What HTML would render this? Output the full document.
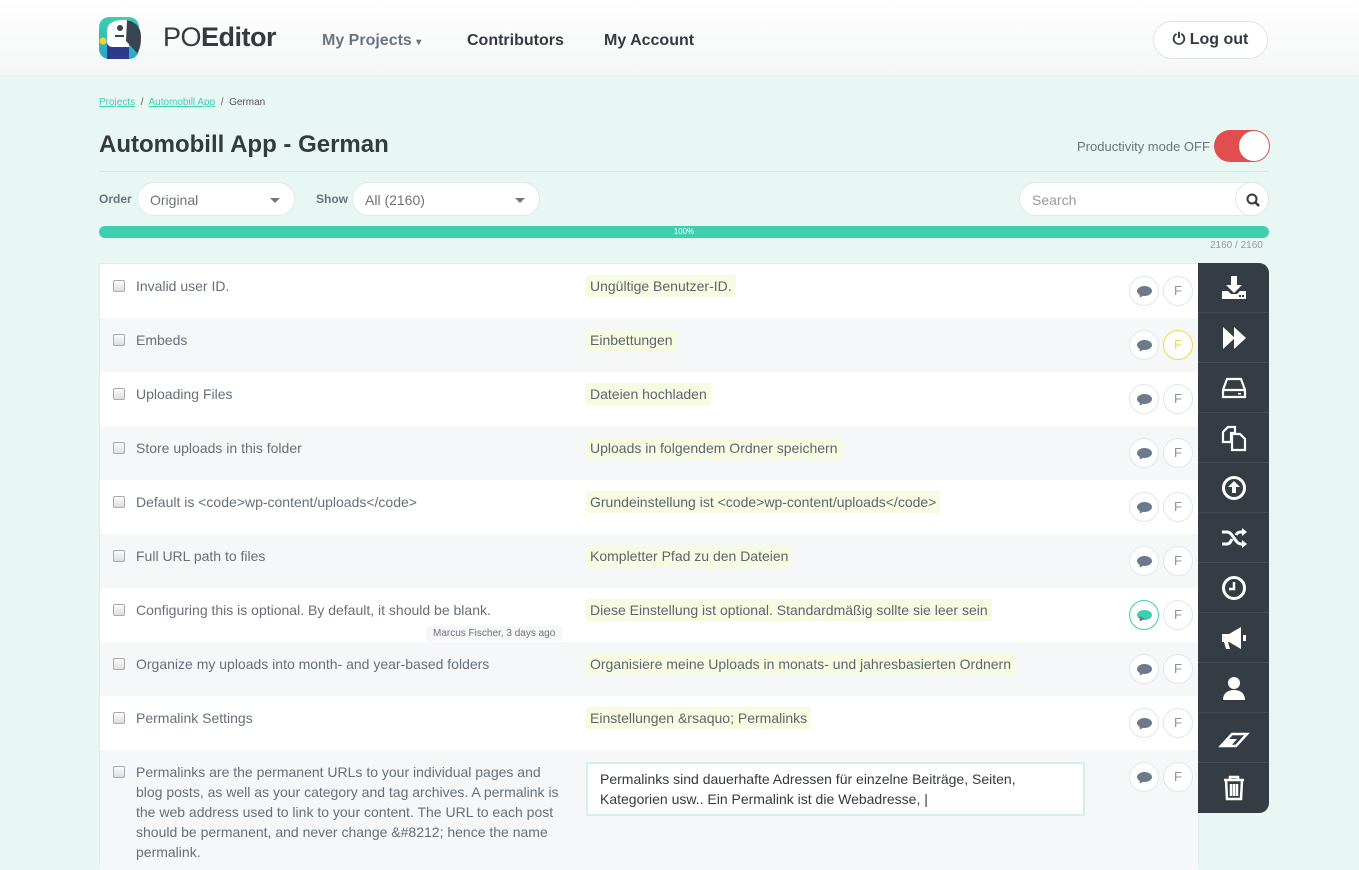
<!DOCTYPE html>
<html><head><meta charset="utf-8"><style>
*{box-sizing:border-box;margin:0;padding:0}
body{width:1359px;height:850px;overflow:hidden;background:#e8f7f4;font-family:"Liberation Sans",Arial,sans-serif;color:#5f6b76;position:relative}
.hdr{position:absolute;left:0;top:0;width:1359px;height:75px;background:linear-gradient(#fff,#f5f6f6)}
.nav{position:absolute;top:32px;font-size:16px;font-weight:bold;color:#343a40}
.abs{position:absolute}
.sel{position:absolute;top:182px;height:34px;background:#fff;border:1px solid #e2e8e8;border-radius:17px;font-size:14px;color:#6b747c;padding:9px 12px}
.caret{position:absolute;right:14px;top:15px;border-left:5px solid transparent;border-right:5px solid transparent;border-top:5px solid #777}
.list{position:absolute;left:99px;top:263px;width:1100px;height:600px;background:#fff;border:1px solid #e4eaea}
.row{position:absolute;left:0;width:1098px;height:54px}
.row.g{background:#f5f7f9}
.cb{position:absolute;left:13px;top:16px;width:12px;height:12px;border:1px solid #aaa;border-radius:2px;background:linear-gradient(#fcfcfc,#ddd)}
.src{position:absolute;left:36px;top:12px;font-size:14px;color:#66707a;line-height:20px}
.tr{position:absolute;left:486px;top:11px;font-size:14px;color:#5b6670;background:#f6fbe2;padding:2px 4px;line-height:18px}
.ic{position:absolute;top:12px;width:30px;height:30px;border:1px solid #e2e6e8;border-radius:50%;background:#fff}
.ic.c{left:1029px}.ic.f{left:1063px;font-size:13px;color:#8a9399;text-align:center;line-height:28px}
.bub{position:absolute;left:7px;top:9px;width:15px;height:10px;border-radius:50%;background:#6d7a8c}
.bub:after{content:"";position:absolute;left:1px;top:7px;border-left:3px solid transparent;border-right:3px solid transparent;border-top:5px solid #6d7a8c;transform:rotate(30deg)}
.side{position:absolute;left:1198px;top:263px;width:71px;height:550px;background:#353c43;border-radius:0 10px 10px 0}
.side div{height:50px;border-bottom:1px solid #454c53;display:flex;align-items:center;justify-content:center}
.side div:last-child{border:none}
</style></head><body>
<div class="hdr"></div>
<svg class="abs" style="left:99px;top:17px" width="42" height="42" viewBox="0 0 42 42">
<defs><linearGradient id="lg" x1="0" y1="0" x2="0" y2="1"><stop offset="0" stop-color="#3ecfae"/><stop offset="1" stop-color="#2aa7c8"/></linearGradient></defs>
<rect x="0" y="0" width="40" height="42" rx="10" fill="url(#lg)"/>
<path d="M8 26 L8 42 L30 42 L30 26Z" fill="#2e3a8c"/>
<path d="M8 14 Q8 4 22 3 L30 3 L30 30 L14 30 Q8 30 8 24Z" fill="#fff"/>
<path d="M28 3 Q42 6 42 20 Q42 32 38 36 L27 24Z" fill="#3a4450"/>
<circle cx="21" cy="11" r="3" fill="#3a4450"/><rect x="16" y="18" width="9" height="2" fill="#3a4450"/>
<circle cx="4" cy="24" r="3.5" fill="#f5d327"/></svg>
<div class="abs" style="left:163px;top:22px;font-size:27px;color:#343a40;letter-spacing:-0.5px"><span style="font-weight:300">PO</span><b>Editor</b></div>
<div class="nav" style="left:322px;color:#6b7580">My Projects <span style="font-size:10px">▾</span></div>
<div class="nav" style="left:467px">Contributors</div>
<div class="nav" style="left:604px">My Account</div>
<div class="abs" style="left:1153px;top:21px;width:115px;height:38px;border:1px solid #e0e3e5;border-radius:19px;background:#fff;font-size:16px;font-weight:bold;color:#343a40;text-align:center;line-height:36px">⏻ Log out</div>
<div class="abs" style="left:99px;top:97px;font-size:10px;color:#555"><span style="color:#3ecfae;text-decoration:underline">Projects</span> &nbsp;/&nbsp; <span style="color:#3ecfae;text-decoration:underline">Automobill App</span> &nbsp;/&nbsp; German</div>
<div class="abs" style="left:99px;top:131px;font-size:24px;font-weight:bold;color:#343a40">Automobill App - German</div>
<div class="abs" style="left:1077px;top:139px;font-size:13px;color:#6b747c">Productivity mode OFF</div>
<div class="abs" style="left:1214px;top:130px;width:56px;height:32px;border-radius:16px;background:#e24d4d"><div style="position:absolute;right:1px;top:1px;width:30px;height:30px;border-radius:50%;background:#fff"></div></div>
<div class="abs" style="left:99px;top:171px;width:1170px;height:1px;background:#d8e6e3"></div>
<div class="abs" style="left:99px;top:192px;font-size:12px;font-weight:bold;color:#6b747c">Order</div>
<div class="sel" style="left:137px;width:158px">Original<span class="caret"></span></div>
<div class="abs" style="left:316px;top:192px;font-size:12px;font-weight:bold;color:#6b747c">Show</div>
<div class="sel" style="left:352px;width:188px">All (2160)<span class="caret"></span></div>
<div class="sel" style="left:1019px;width:250px;color:#999">Search<div style="position:absolute;right:-1px;top:-1px;width:34px;height:34px;border:1px solid #e2e8e8;border-radius:50%;background:#fff"><svg width="34" height="34"><circle cx="16" cy="16" r="4.5" fill="none" stroke="#343a40" stroke-width="2"/><path d="M19 19L23 23" stroke="#343a40" stroke-width="2.5"/></svg></div></div>
<div class="abs" style="left:99px;top:226px;width:1170px;height:12px;border-radius:6px;background:#3ecfae;color:#fff;font-size:8px;text-align:center;line-height:12px">100%</div>
<div class="abs" style="left:1210px;top:240px;font-size:10px;color:#999">2160 / 2160</div>
<div class="list">
<div class="row" style="top:0"><span class="cb"></span><span class="src">Invalid user ID.</span><span class="tr">Ungültige Benutzer-ID.</span><span class="ic c"><i class="bub"></i></span><span class="ic f">F</span></div>
<div class="row g" style="top:54px"><span class="cb"></span><span class="src">Embeds</span><span class="tr">Einbettungen</span><span class="ic c"><i class="bub"></i></span><span class="ic f" style="border-color:#f2d64b;color:#f2d64b">F</span></div>
<div class="row" style="top:108px"><span class="cb"></span><span class="src">Uploading Files</span><span class="tr">Dateien hochladen</span><span class="ic c"><i class="bub"></i></span><span class="ic f">F</span></div>
<div class="row g" style="top:162px"><span class="cb"></span><span class="src">Store uploads in this folder</span><span class="tr">Uploads in folgendem Ordner speichern</span><span class="ic c"><i class="bub"></i></span><span class="ic f">F</span></div>
<div class="row" style="top:216px"><span class="cb"></span><span class="src">Default is &lt;code&gt;wp-content/uploads&lt;/code&gt;</span><span class="tr">Grundeinstellung ist &lt;code&gt;wp-content/uploads&lt;/code&gt;</span><span class="ic c"><i class="bub"></i></span><span class="ic f">F</span></div>
<div class="row g" style="top:270px"><span class="cb"></span><span class="src">Full URL path to files</span><span class="tr">Kompletter Pfad zu den Dateien</span><span class="ic c"><i class="bub"></i></span><span class="ic f">F</span></div>
<div class="row" style="top:324px"><span class="cb"></span><span class="src">Configuring this is optional. By default, it should be blank.</span><span class="tr">Diese Einstellung ist optional. Standardmäßig sollte sie leer sein</span><span class="ic c" style="border-color:#3ecfae"><i class="bub" style="background:#3ecfae"></i></span><span class="ic f">F</span><span style="position:absolute;left:326px;top:38px;background:#f5f7f9;font-size:10px;color:#6b747c;padding:2px 7px">Marcus Fischer, 3 days ago</span></div>
<div class="row g" style="top:378px"><span class="cb"></span><span class="src">Organize my uploads into month- and year-based folders</span><span class="tr">Organisiere meine Uploads in monats- und jahresbasierten Ordnern</span><span class="ic c"><i class="bub"></i></span><span class="ic f">F</span></div>
<div class="row" style="top:432px"><span class="cb"></span><span class="src">Permalink Settings</span><span class="tr">Einstellungen &amp;rsaquo; Permalinks</span><span class="ic c"><i class="bub"></i></span><span class="ic f">F</span></div>
<div class="row g" style="top:486px;height:120px"><span class="cb"></span><span class="src" style="width:432px">Permalinks are the permanent URLs to your individual pages and blog posts, as well as your category and tag archives. A permalink is the web address used to link to your content. The URL to each post should be permanent, and never change &amp;#8212; hence the name permalink.</span>
<div style="position:absolute;left:486px;top:12px;width:499px;height:54px;background:#fff;border:2px solid #d5efe9;font-size:14px;color:#343a40;padding:5px 12px;line-height:20px">Permalinks sind dauerhafte Adressen für einzelne Beiträge, Seiten, Kategorien usw.. Ein Permalink ist die Webadresse, |</div>
<span class="ic c"><i class="bub"></i></span><span class="ic f">F</span></div>
</div>
<div class="side">
<div><svg width="28" height="28" viewBox="0 0 28 28" fill="#fff"><path d="M11 2h6v9h5l-8 8-8-8h5z"/><path d="M2 17h6l3 3h6l3-3h6v8H2z"/><rect x="19" y="21" width="2" height="2" fill="#353c43"/><rect x="22" y="21" width="2" height="2" fill="#353c43"/></svg></div>
<div><svg width="28" height="28" viewBox="0 0 28 28" fill="#fff"><path d="M3 3l12 11-12 11z M14 3l12 11-12 11z"/></svg></div>
<div><svg width="28" height="28" viewBox="0 0 28 28" fill="none" stroke="#fff" stroke-width="2.2"><path d="M7 5h14l4 11v7H3v-7z M3 16h22"/><rect x="18" y="19" width="3" height="1.5" fill="#fff" stroke="none"/></svg></div>
<div><svg width="28" height="28" viewBox="0 0 28 28" fill="none" stroke="#fff" stroke-width="2.2"><path d="M8 3h7v6h-4v9H3V8z M12 10h8l5 5v11H12z"/></svg></div>
<div><svg width="28" height="28" viewBox="0 0 28 28"><circle cx="14" cy="14" r="10.5" fill="none" stroke="#fff" stroke-width="3"/><path d="M14 7l6 6h-4v6h-4v-6H8z" fill="#fff"/></svg></div>
<div><svg width="28" height="28" viewBox="0 0 28 28" fill="none" stroke="#fff" stroke-width="3"><path d="M2 8h5c6 0 8 12 14 12h3 M2 20h5c3 0 4-3 5-5 M16 11c1-2 3-3 5-3h3"/><path d="M22 4l5 4-5 4z M22 16l5 4-5 4z" fill="#fff" stroke="none"/></svg></div>
<div><svg width="28" height="28" viewBox="0 0 28 28" fill="none" stroke="#fff" stroke-width="3"><circle cx="14" cy="14" r="10.5"/><path d="M14 8v7h-5" stroke-width="2.5"/></svg></div>
<div><svg width="28" height="28" viewBox="0 0 28 28" fill="#fff"><path d="M2 10h7l12-7v22l-12-7H8l2 7H6l-2-7H2z"/><rect x="23" y="11" width="3" height="6"/></svg></div>
<div><svg width="28" height="28" viewBox="0 0 28 28" fill="#fff"><circle cx="14" cy="9" r="6"/><path d="M3 26c0-7 5-10 11-10s11 3 11 10z"/></svg></div>
<div><svg width="32" height="28" viewBox="0 0 32 28"><path d="M3 22L14 10h15L18 22z" fill="none" stroke="#fff" stroke-width="2.5"/><path d="M3 22l6-7h10l-6 7z" fill="#fff"/></svg></div>
<div><svg width="28" height="28" viewBox="0 0 28 28" fill="none" stroke="#fff" stroke-width="2.5"><path d="M4 6h20 M10 6V3h8v3 M6 6l1 19h14l1-19 M11 10v12 M14 10v12 M17 10v12"/></svg></div>
</div>
</body></html>
